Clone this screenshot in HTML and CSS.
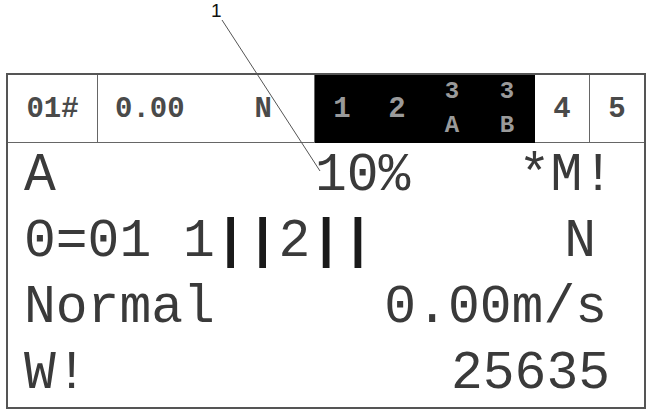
FILE: index.html
```html
<!DOCTYPE html>
<html>
<head>
<meta charset="utf-8">
<link rel="stylesheet" href="styles.css">
</head>
<body>
<div class="page">
  <div class="callout">1</div>
  <div class="screen">
    <div class="header">
      <div class="cell c1">01#</div>
      <div class="cell c2"><span>0.00</span><span>N</span></div>
      <div class="cell dark">1</div>
      <div class="cell dark">2</div>
      <div class="cell dark stack"><span>3</span><span>A</span></div>
      <div class="cell dark stack"><span>3</span><span>B</span></div>
      <div class="cell">4</div>
      <div class="cell last">5</div>
    </div>
    <div class="body">
      <div class="row"><span class="lead-a">A</span><span>10%</span><span class="right r1">*M!</span></div>
      <div class="row"><span>0=01 1<b>|</b><b>|</b>2<b>|</b><b>|</b></span><span class="right r2">N</span></div>
      <div class="row"><span>Normal</span><span class="right r3">0.00m/s</span></div>
      <div class="row"><span>W!</span><span class="right">25635</span></div>
    </div>
  </div>
  <svg class="leader" width="656" height="414" viewBox="0 0 656 414">
    <line x1="222" y1="20" x2="320" y2="171" stroke="#555" stroke-width="1"/>
  </svg>
</div>
</body>
</html>
```

FILE: styles.css
```css
html, body {
  margin: 0;
  padding: 0;
  background: #fff;
}

.page {
  position: relative;
  width: 656px;
  height: 414px;
  overflow: hidden;
}

.callout {
  font-family: "Liberation Sans", Arial, sans-serif;
  font-size: 19px;
  line-height: 22px;
  color: #111;
  padding: 0 0 0 211px;
  height: 73px;
  box-sizing: border-box;
}

.screen {
  margin-left: 6px;
  width: 640px;
  box-sizing: border-box;
  border: 2px solid #555;
  font-family: "Liberation Mono", monospace;
}

.header {
  display: grid;
  grid-template-columns: 90px 217px 55px 55px 55px 55px 55px 1fr;
  height: 68px;
  border-bottom: 1px solid #666;
  box-sizing: border-box;
  font-weight: bold;
  font-size: 29px;
  color: #4a4a4a;
}

.cell {
  display: flex;
  align-items: center;
  justify-content: center;
  border-right: 1px solid #666;
}

.c2 {
  justify-content: space-between;
  padding: 0 42px 0 17px;
}

.dark {
  background: #000;
  color: #9a9a9a;
  border-right-color: #000;
}

.stack {
  flex-direction: column;
  font-size: 24px;
  line-height: 34px;
}

.last {
  border-right: none;
}

.body {
  font-size: 53px;
  line-height: 66px;
  color: #3a3a3a;
  padding: 0 34px 0 16px;
}

.row {
  display: flex;
  white-space: pre;
  height: 66px;
}

.row .right {
  margin-left: auto;
}

.lead-a {
  width: 291px;
}

.r1 {
  margin-right: -4px;
}

.r2 {
  margin-right: 14px;
}

.r3 {
  margin-right: 3px;
}

.row b {
  font-weight: bold;
  color: #1a1a1a;
}

.leader {
  position: absolute;
  left: 0;
  top: 0;
  pointer-events: none;
}
```
